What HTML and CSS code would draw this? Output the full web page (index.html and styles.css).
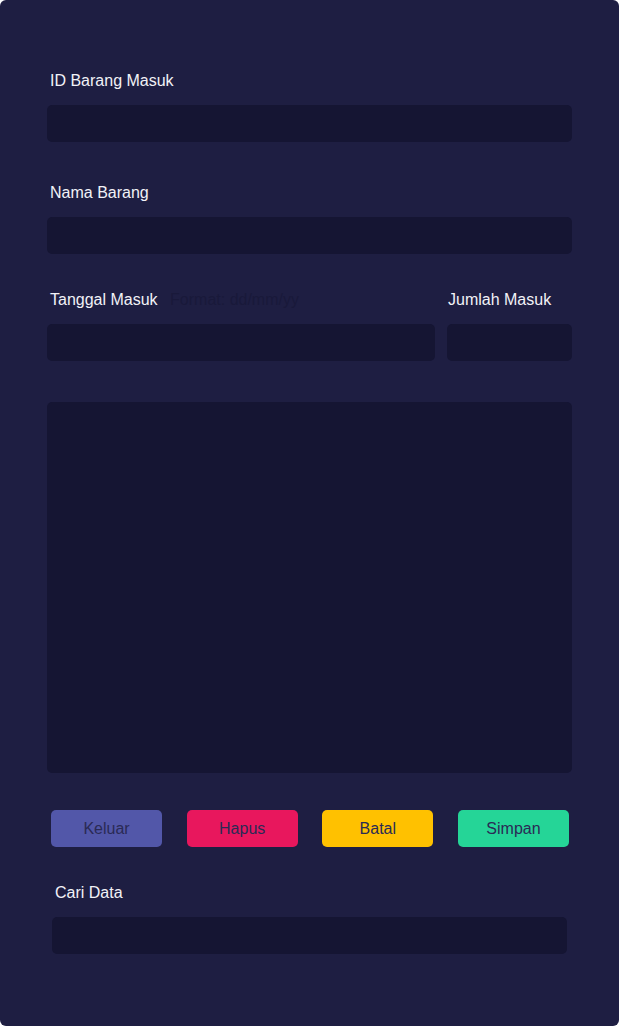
FILE: index.html
```html
<!DOCTYPE html>
<html lang="id">
<head>
  <meta charset="UTF-8">
  <title>Barang Masuk</title>
  <link rel="stylesheet" href="styles.css">
</head>
<body>

  <div class="panel">
    <form class="form">

      <div class="field">
        <label>ID Barang Masuk</label>
        <input type="text">
      </div>

      <div class="field">
        <label>Nama Barang</label>
        <input type="text">
      </div>

      <div class="row">
        <div class="field grow">
          <label>Tanggal Masuk <span class="hint">Format: dd/mm/yy</span></label>
          <input type="text">
        </div>
        <div class="field small">
          <label>Jumlah Masuk</label>
          <input type="text">
        </div>
      </div>

      <textarea class="notes"></textarea>

      <div class="buttons">
        <button type="button" class="btn keluar">Keluar</button>
        <button type="button" class="btn hapus">Hapus</button>
        <button type="button" class="btn batal">Batal</button>
        <button type="button" class="btn simpan">Simpan</button>
      </div>

      <div class="field search">
        <label>Cari Data</label>
        <input type="text">
      </div>

    </form>
  </div>

</body>
</html>
```

FILE: styles.css
```css
* {
  box-sizing: border-box;
  font-family: 'Liberation Sans', Arial, sans-serif;
}

body {
  margin: 0;
  padding: 0;
  background-color: #ffffff;
}

.panel {
  height: 1026px;
  background-color: #1e1e42;
  border-radius: 6px;
  padding: 71px 47px 0;
}

.form {
  display: flex;
  flex-direction: column;
}

.field {
  display: flex;
  flex-direction: column;
  gap: 15px;
  margin-bottom: 41px;
}

label {
  display: block;
  color: #f2f2f7;
  font-size: 16px;
  line-height: 18px;
  padding: 1px 0 0 3px;
}

.hint {
  color: #19193a;
  margin-left: 8px;
}

input, textarea {
  width: 100%;
  height: 37px;
  border: none;
  border-radius: 5px;
  background-color: #151533;
  outline: none;
  color: #f2f2f7;
  font-size: 14px;
  padding: 0 10px;
}

.row {
  display: flex;
  gap: 12px;
  margin-top: -5px;
}

.grow {
  flex: 1;
}

.small {
  width: 125px;
}

.small label {
  padding-left: 1px;
}

.notes {
  height: 371px;
  resize: none;
  padding: 10px;
}

.buttons {
  display: flex;
  justify-content: space-between;
  margin: 37px 3px 36px 4px;
}

.btn {
  width: 111px;
  height: 37px;
  padding-top: 2px;
  border: none;
  border-radius: 5px;
  font-size: 16px;
  color: #2a2a55;
  cursor: pointer;
}

.keluar {
  background-color: #5257a9;
}

.hapus {
  background-color: #e8175d;
}

.batal {
  background-color: #ffc100;
}

.simpan {
  background-color: #25d597;
}

.search {
  padding: 0 5px;
}
```
